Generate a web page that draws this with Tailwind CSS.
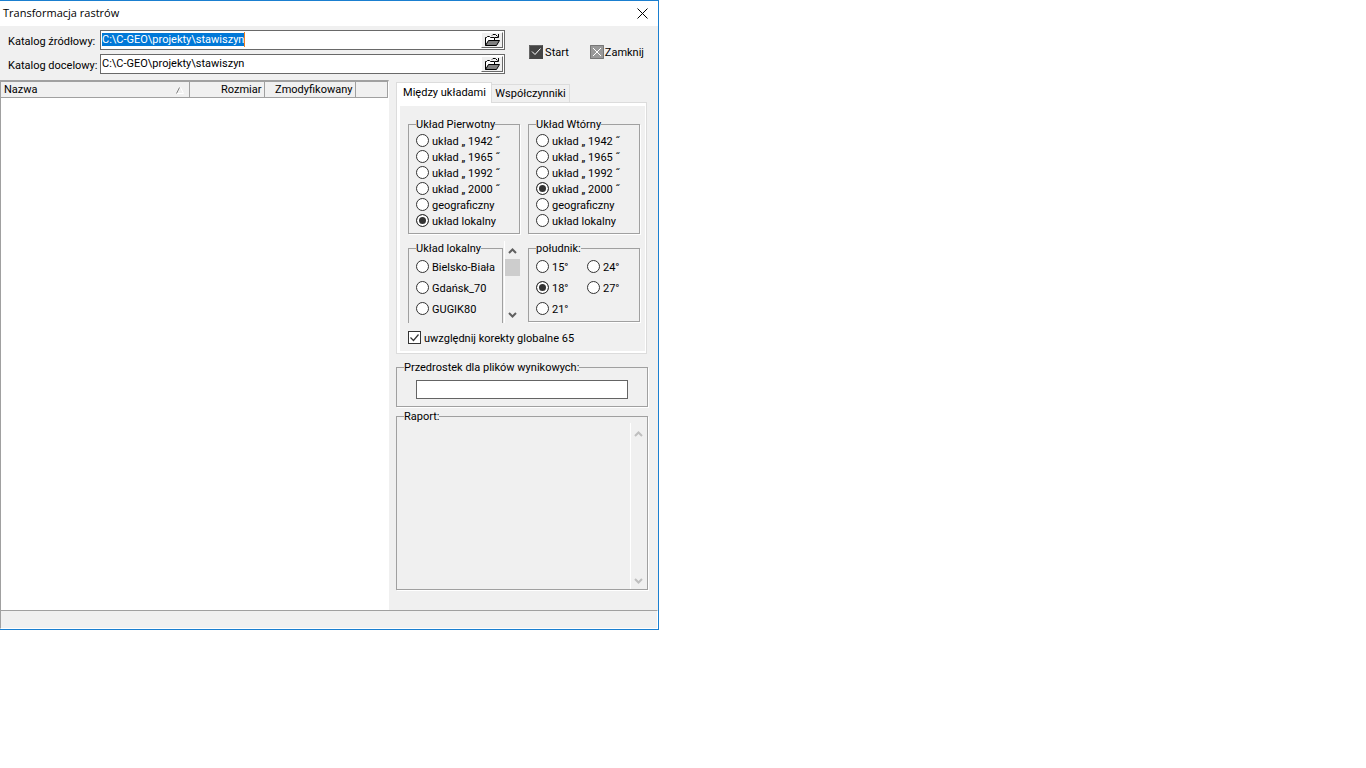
<!DOCTYPE html>
<html lang="pl">
<head>
<meta charset="utf-8">
<meta name="viewport" content="width=device-width, initial-scale=1">
<title>Transformacja rastrów</title>
<script src="https://cdn.jsdelivr.net/npm/@tailwindcss/browser@4"></script>
</head>
<body class="bg-white text-black text-[11px] leading-[14px] font-['Roboto','Liberation_Sans',sans-serif]">

<svg class="hidden" aria-hidden="true">
  <symbol id="folder" viewBox="0 0 16 14">
    <path d="M1.500 12.500V4.500h1l1-1h2l1 1h4v3" fill="#fff" stroke="#000"/>
    <path d="M1.500 12.500l3-5h11l-3 5z" fill="#808080" stroke="#000"/>
    <path d="M8 2.500l1-1h2.500l2 2M14.500 1v3.500H11" fill="none" stroke="#000"/>
  </symbol>
  <symbol id="up" viewBox="0 0 9 6"><path d="M1 5l3.500-3.500L8 5" fill="none" stroke="currentColor" stroke-width="2"/></symbol>
  <symbol id="down" viewBox="0 0 9 6"><path d="M1 1l3.500 3.500L8 1" fill="none" stroke="currentColor" stroke-width="2"/></symbol>
</svg>

<main class="w-full max-w-[659px] border-t border-r border-b border-[#1a7fd0] bg-[#f0f0f0] shadow-[0_1px_0_#999]">
  <header class="flex h-[25px] items-center justify-between bg-white pb-px pl-[3px] pr-[10px]">
    <h1 class="text-[11px] font-['Open_Sans','Noto_Sans',sans-serif]">Transformacja rastrów</h1>
    <button type="button" aria-label="Zamknij okno">
      <svg class="size-[11px]" viewBox="0 0 11 11"><path d="M.5.5l10 10M10.500.5l-10 10" stroke="#000" fill="none"/></svg>
    </button>
  </header>

  <form>
    <div class="flex justify-between pt-1 pb-[6px] pl-2 pr-[14px]">
      <div class="flex flex-col gap-1">
        <div class="flex items-center">
          <label for="src" class="w-[92px] pt-1">Katalog źródłowy:</label>
          <div class="flex h-5 w-[405px] justify-between border border-[#696969] bg-white p-px">
            <input id="src" type="text" value="C:\C-GEO\projekty\stawiszyn" class="h-[15px] max-w-[370px] border-r border-[#f08020] field-sizing-content outline-none selection:bg-[#0078d7] selection:text-white">
            <button type="button" aria-label="Wybierz katalog źródłowy" class="flex w-[22px] items-center justify-center border border-white border-r-[#696969] border-b-[#696969] bg-[#f0f0f0]"><svg class="h-[14px] w-4"><use href="#folder"/></svg></button>
          </div>
        </div>
        <div class="flex items-center">
          <label for="dst" class="w-[92px] pt-1">Katalog docelowy:</label>
          <div class="flex h-5 w-[405px] border border-[#696969] bg-white p-px">
            <input id="dst" type="text" value="C:\C-GEO\projekty\stawiszyn" class="h-[15px] min-w-0 flex-1 outline-none">
            <button type="button" aria-label="Wybierz katalog docelowy" class="flex w-[22px] items-center justify-center border border-white border-r-[#696969] border-b-[#696969] bg-[#f0f0f0]"><svg class="h-[14px] w-4"><use href="#folder"/></svg></button>
          </div>
        </div>
      </div>
      <div class="flex items-center gap-[21px]">
        <button type="button" class="flex items-center gap-[2px]">
          <svg class="size-[14px]" viewBox="0 0 14 14"><rect width="14" height="14" fill="#444"/><path d="M.5 13.500V.5h13" stroke="#666" fill="none"/><path d="M3 6.500l3 3 5.500-6" stroke="#fff" fill="none"/></svg>
          <span class="pt-[2px]">Start</span>
        </button>
        <button type="button" class="flex items-center gap-px">
          <svg class="size-[14px]" viewBox="0 0 14 14"><rect width="14" height="14" fill="#999"/><path d="M.5.5h13v13H.5z" stroke="#777" fill="none"/><path d="M3 3l8 8M11 3l-8 8" stroke="#fff" fill="none"/></svg>
          <span class="pt-[2px]">Zamknij</span>
        </button>
      </div>
    </div>

    <div class="flex">
      <div class="min-w-0 flex-1 border-t-2 border-l border-[#a0a0a0] border-r border-r-white bg-white">
        <table class="w-full table-fixed border-r border-b border-[#a0a0a0] bg-[#f0f0f0]">
          <thead>
            <tr class="h-[15px] text-left">
              <th class="w-[188px] border-r border-[#a0a0a0] p-0 pt-px pl-[3px] font-normal">
                <div class="flex items-center justify-between pr-[5px]">Nazwa
                  <svg class="h-[7px] w-[8px]" viewBox="0 0 8 7"><path d="M.5 6.500h7L4.500.5" stroke="#fff" fill="none"/><path d="M.5 6.500L3.500.5" stroke="#808080" fill="none"/></svg>
                </div>
              </th>
              <th class="w-[75px] border-r border-[#a0a0a0] p-0 pt-px pr-[2px] text-right font-normal">Rozmiar</th>
              <th class="w-[91px] border-r border-[#a0a0a0] p-0 pt-px pr-[2px] text-right font-normal">Zmodyfikowany</th>
              <th class="p-0"></th>
            </tr>
          </thead>
          <tbody></tbody>
        </table>
      </div>

      <div class="w-[269px] pt-[2px] pb-5 pl-[7px] pr-[10px]">
        <div role="tablist" class="flex items-end">
          <button type="button" role="tab" aria-selected="true" class="relative z-10 -mb-px h-[21px] w-[96px] border border-b-0 border-[#dcdcdc] bg-white pb-px pl-px">Między układami</button>
          <button type="button" role="tab" aria-selected="false" class="h-[18px] w-[78px] border border-b-0 border-l-0 border-[#dcdcdc] pt-px">Współczynniki</button>
        </div>
        <div role="tabpanel" class="mr-px border border-[#dcdcdc] bg-white pt-[3px] pl-[3px] pr-px pb-[2px]">
          <div class="bg-[#f0f0f0] px-2 pr-[5px] pt-[11px] pb-[6px]">
            <div class="flex gap-2">
              <fieldset class="w-28 border border-[#a0a0a0] px-[7px] pt-[2px] pb-1 shadow-[1px_1px_0_#fff]">
                <legend class="whitespace-nowrap pt-[2px] leading-[12px]">Układ Pierwotny</legend>
                <label class="flex h-4 items-start gap-[3px] whitespace-nowrap leading-[18px]"><input type="radio" name="a" class="mt-px size-[13px] shrink-0 appearance-none rounded-full border border-[#333] bg-white checked:bg-[#333] checked:shadow-[inset_0_0_0_2px_#fff]">układ „ 1942 ˝</label>
                <label class="flex h-4 items-start gap-[3px] whitespace-nowrap leading-[18px]"><input type="radio" name="a" class="mt-px size-[13px] shrink-0 appearance-none rounded-full border border-[#333] bg-white checked:bg-[#333] checked:shadow-[inset_0_0_0_2px_#fff]">układ „ 1965 ˝</label>
                <label class="flex h-4 items-start gap-[3px] whitespace-nowrap leading-[18px]"><input type="radio" name="a" class="mt-px size-[13px] shrink-0 appearance-none rounded-full border border-[#333] bg-white checked:bg-[#333] checked:shadow-[inset_0_0_0_2px_#fff]">układ „ 1992 ˝</label>
                <label class="flex h-4 items-start gap-[3px] whitespace-nowrap leading-[18px]"><input type="radio" name="a" class="mt-px size-[13px] shrink-0 appearance-none rounded-full border border-[#333] bg-white checked:bg-[#333] checked:shadow-[inset_0_0_0_2px_#fff]">układ „ 2000 ˝</label>
                <label class="flex h-4 items-start gap-[3px] whitespace-nowrap leading-[18px]"><input type="radio" name="a" class="mt-px size-[13px] shrink-0 appearance-none rounded-full border border-[#333] bg-white checked:bg-[#333] checked:shadow-[inset_0_0_0_2px_#fff]">geograficzny</label>
                <label class="flex h-4 items-start gap-[3px] whitespace-nowrap leading-[18px]"><input type="radio" name="a" checked class="mt-px size-[13px] shrink-0 appearance-none rounded-full border border-[#333] bg-white checked:bg-[#333] checked:shadow-[inset_0_0_0_2px_#fff]">układ lokalny</label>
              </fieldset>
              <fieldset class="w-28 border border-[#a0a0a0] px-[7px] pt-[2px] pb-1 shadow-[1px_1px_0_#fff]">
                <legend class="whitespace-nowrap pt-[2px] leading-[12px]">Układ Wtórny</legend>
                <label class="flex h-4 items-start gap-[3px] whitespace-nowrap leading-[18px]"><input type="radio" name="b" class="mt-px size-[13px] shrink-0 appearance-none rounded-full border border-[#333] bg-white checked:bg-[#333] checked:shadow-[inset_0_0_0_2px_#fff]">układ „ 1942 ˝</label>
                <label class="flex h-4 items-start gap-[3px] whitespace-nowrap leading-[18px]"><input type="radio" name="b" class="mt-px size-[13px] shrink-0 appearance-none rounded-full border border-[#333] bg-white checked:bg-[#333] checked:shadow-[inset_0_0_0_2px_#fff]">układ „ 1965 ˝</label>
                <label class="flex h-4 items-start gap-[3px] whitespace-nowrap leading-[18px]"><input type="radio" name="b" class="mt-px size-[13px] shrink-0 appearance-none rounded-full border border-[#333] bg-white checked:bg-[#333] checked:shadow-[inset_0_0_0_2px_#fff]">układ „ 1992 ˝</label>
                <label class="flex h-4 items-start gap-[3px] whitespace-nowrap leading-[18px]"><input type="radio" name="b" checked class="mt-px size-[13px] shrink-0 appearance-none rounded-full border border-[#333] bg-white checked:bg-[#333] checked:shadow-[inset_0_0_0_2px_#fff]">układ „ 2000 ˝</label>
                <label class="flex h-4 items-start gap-[3px] whitespace-nowrap leading-[18px]"><input type="radio" name="b" class="mt-px size-[13px] shrink-0 appearance-none rounded-full border border-[#333] bg-white checked:bg-[#333] checked:shadow-[inset_0_0_0_2px_#fff]">geograficzny</label>
                <label class="flex h-4 items-start gap-[3px] whitespace-nowrap leading-[18px]"><input type="radio" name="b" class="mt-px size-[13px] shrink-0 appearance-none rounded-full border border-[#333] bg-white checked:bg-[#333] checked:shadow-[inset_0_0_0_2px_#fff]">układ lokalny</label>
              </fieldset>
            </div>

            <div class="mt-[7px] flex items-start gap-2">
              <div class="flex w-28 justify-between">
                <fieldset class="w-[95px] border border-b-0 border-[#a0a0a0] px-[7px] pt-[2px] pb-[3px]">
                  <legend class="whitespace-nowrap pt-[2px] leading-[12px]">Układ lokalny</legend>
                  <label class="flex h-[21px] items-start gap-[3px] whitespace-nowrap leading-[21px]"><input type="radio" name="c" class="mt-[3px] size-[13px] shrink-0 appearance-none rounded-full border border-[#333] bg-white checked:bg-[#333] checked:shadow-[inset_0_0_0_2px_#fff]">Bielsko-Biała</label>
                  <label class="flex h-[21px] items-start gap-[3px] whitespace-nowrap leading-[21px]"><input type="radio" name="c" class="mt-[3px] size-[13px] shrink-0 appearance-none rounded-full border border-[#333] bg-white checked:bg-[#333] checked:shadow-[inset_0_0_0_2px_#fff]">Gdańsk_70</label>
                  <label class="flex h-[21px] items-start gap-[3px] whitespace-nowrap leading-[21px]"><input type="radio" name="c" class="mt-[3px] size-[13px] shrink-0 appearance-none rounded-full border border-[#333] bg-white checked:bg-[#333] checked:shadow-[inset_0_0_0_2px_#fff]">GUGIK80</label>
                </fieldset>
                <div class="flex w-4 flex-col border-l border-white text-[#606060]">
                  <button type="button" aria-label="Przewiń w górę" class="flex h-[18px] items-center justify-center pt-[2px]"><svg class="h-[6px] w-[9px]"><use href="#up"/></svg></button>
                  <div class="h-[17px] bg-[#cdcdcd]"></div>
                  <button type="button" aria-label="Przewiń w dół" class="mt-auto flex h-[17px] items-center justify-center"><svg class="h-[6px] w-[9px]"><use href="#down"/></svg></button>
                </div>
              </div>
              <fieldset class="w-28 border border-[#a0a0a0] px-[7px] pt-[2px] pb-px shadow-[1px_1px_0_#fff]">
                <legend class="pt-[2px] leading-[12px]">południk:</legend>
                <div class="grid grid-flow-col grid-cols-[51px_auto] grid-rows-3">
                  <label class="flex h-[21px] items-start gap-[3px] leading-[21px]"><input type="radio" name="d" class="mt-[3px] size-[13px] shrink-0 appearance-none rounded-full border border-[#333] bg-white checked:bg-[#333] checked:shadow-[inset_0_0_0_2px_#fff]">15°</label>
                  <label class="flex h-[21px] items-start gap-[3px] leading-[21px]"><input type="radio" name="d" checked class="mt-[3px] size-[13px] shrink-0 appearance-none rounded-full border border-[#333] bg-white checked:bg-[#333] checked:shadow-[inset_0_0_0_2px_#fff]">18°</label>
                  <label class="flex h-[21px] items-start gap-[3px] leading-[21px]"><input type="radio" name="d" class="mt-[3px] size-[13px] shrink-0 appearance-none rounded-full border border-[#333] bg-white checked:bg-[#333] checked:shadow-[inset_0_0_0_2px_#fff]">21°</label>
                  <label class="flex h-[21px] items-start gap-[3px] leading-[21px]"><input type="radio" name="d" class="mt-[3px] size-[13px] shrink-0 appearance-none rounded-full border border-[#333] bg-white checked:bg-[#333] checked:shadow-[inset_0_0_0_2px_#fff]">24°</label>
                  <label class="flex h-[21px] items-start gap-[3px] leading-[21px]"><input type="radio" name="d" class="mt-[3px] size-[13px] shrink-0 appearance-none rounded-full border border-[#333] bg-white checked:bg-[#333] checked:shadow-[inset_0_0_0_2px_#fff]">27°</label>
                </div>
              </fieldset>
            </div>

            <label class="mt-[7px] flex h-[15px] items-start gap-[3px] leading-[17px]">
              <span class="mt-px grid size-[13px]">
                <input type="checkbox" checked class="peer col-start-1 row-start-1 size-[13px] appearance-none border border-[#333] bg-white">
                <svg class="pointer-events-none invisible col-start-1 row-start-1 size-[13px] peer-checked:visible" viewBox="0 0 13 13"><path d="M2.500 6.500l3 3 5-6" stroke="#333" stroke-width="1.200" fill="none"/></svg>
              </span>
              uwzględnij korekty globalne 65
            </label>
          </div>
        </div>

        <fieldset class="mt-[6px] border border-[#a0a0a0] px-[19px] pt-[6px] pb-[7px] shadow-[1px_1px_0_#fff]">
          <legend class="-ml-3 pt-[2px] leading-[12px]"><label for="prefix">Przedrostek dla plików wynikowych:</label></legend>
          <input id="prefix" type="text" class="block h-[19px] w-full max-w-[213px] border border-[#646464] bg-white px-1 outline-none">
        </fieldset>

        <fieldset class="mt-[2px] border border-[#a0a0a0] pl-[7px] shadow-[1px_1px_0_#fff]">
          <legend class="pt-[2px] leading-[12px]"><label for="report">Raport:</label></legend>
          <div class="flex">
            <textarea id="report" readonly class="h-[166px] min-w-0 flex-1 resize-none outline-none"></textarea>
            <div class="flex w-[17px] flex-col border-l border-white pr-px text-[#bfbfbf]">
              <button type="button" disabled aria-label="Raport w górę" class="flex h-[22px] items-center justify-center"><svg class="h-[6px] w-[9px]"><use href="#up"/></svg></button>
              <button type="button" disabled aria-label="Raport w dół" class="mt-auto flex h-[17px] items-center justify-center"><svg class="h-[6px] w-[9px]"><use href="#down"/></svg></button>
            </div>
          </div>
        </fieldset>
      </div>
    </div>
  </form>

  <footer class="h-[19px] border border-[#a0a0a0] border-r-white border-b-white"></footer>
</main>

<script>
  const source = document.getElementById('src');
  source.focus();
  source.select();
</script>
</body>
</html>
